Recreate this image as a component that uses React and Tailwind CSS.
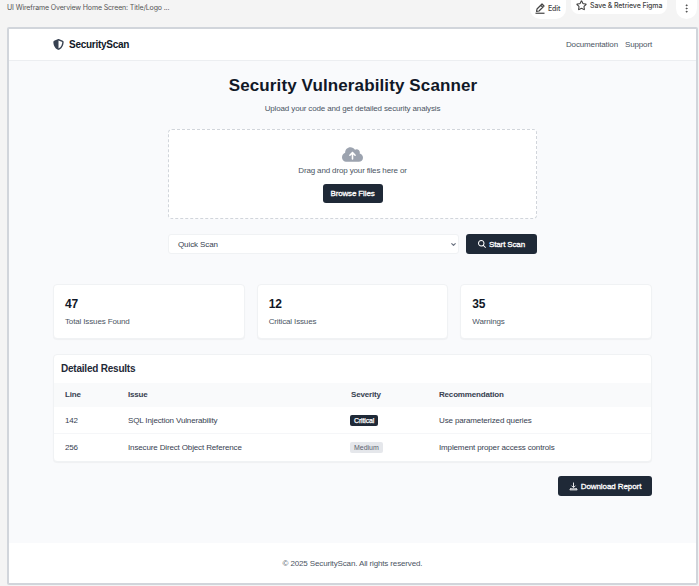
import React from "react";
import { FaShieldHalved, FaCloudArrowUp, FaMagnifyingGlass } from "react-icons/fa6";
import { ChevronDown, EllipsisVertical, Star } from "lucide-react";

const stats = [
  { value: "47", label: "Total Issues Found" },
  { value: "12", label: "Critical Issues" },
  { value: "35", label: "Warnings" },
];

const rows = [
  { line: "142", issue: "SQL Injection Vulnerability", severity: "Critical", fix: "Use parameterized queries" },
  { line: "256", issue: "Insecure Direct Object Reference", severity: "Medium", fix: "Implement proper access controls" },
];

const columns = "grid grid-cols-[63px_223px_88px_1fr] items-center pl-[11px]";
const darkButton =
  "flex items-center justify-center whitespace-nowrap rounded-[3px] bg-[#1f2937] text-white [-webkit-text-stroke:0.3px_white]";

function PenIcon() {
  return (
    <svg viewBox="0 0 20 22" className="-mt-[2px] h-[11px] w-[10px]" fill="none" stroke="currentColor" strokeWidth="2.4" strokeLinejoin="round">
      <path d="M3 17l1-5L14 2l4 4L8 16z M11.5 4.5l4 4" />
      <path d="M1 20.5h18" />
    </svg>
  );
}

function DownloadIcon() {
  return (
    <svg viewBox="0 0 16 16" className="h-[9px] w-[9px]" fill="none" stroke="currentColor" strokeWidth="1.6">
      <path d="M8 1v8M4.5 6.5L8 10l3.5-3.5" />
      <path d="M3.5 10.8L1.5 14h13l-2-3.2M3 12.2h10" />
    </svg>
  );
}

function Toolbar() {
  return (
    <div className="flex h-[27px] items-start pl-[7px] pr-[2px] font-['Inter',sans-serif] text-[#555]">
      <span className="mt-[3px] whitespace-nowrap text-[7px] leading-[9px] tracking-[-0.14px]">
        UI Wireframe Overview Home Screen: Title/Logo ...
      </span>
      <div className="ml-auto flex items-start">
        <button className="flex h-[19px] w-[36px] items-center gap-[3px] rounded-b-[10px] bg-white pl-[5px] text-[7px] font-medium leading-[15px] tracking-[-0.1px] text-[#444]">
          <PenIcon />
          <span className="-mt-[3px]">Edit</span>
        </button>
        <button className="ml-[5px] flex h-[14px] w-[96px] items-center gap-[3px] whitespace-nowrap rounded-b-[8px] bg-white pl-[5px] text-[7px] font-medium leading-[12px] tracking-[-0.1px] text-[#444]">
          <Star size={11} strokeWidth={2.4} className="-mt-[3px]" />
          <span className="-mt-[2px]">Save &amp; Retrieve Figma</span>
        </button>
        <button className="ml-[9px] flex h-[19px] w-[21px] items-center justify-center rounded-b-[11px] bg-white text-[#444]">
          <EllipsisVertical size={11} strokeWidth={2} className="-mt-[3px]" />
        </button>
      </div>
    </div>
  );
}

function Severity({ level }) {
  return (
    <span
      className={
        level === "Critical"
          ? "inline-flex h-[11px] items-center rounded-[2px] bg-[#1f2937] px-[4px] text-[7px] leading-[11px] text-white [-webkit-text-stroke:0.25px_white]"
          : "inline-flex h-[11px] items-center rounded-[2px] bg-gray-200 px-[4px] text-[7px] leading-[11px] tracking-[-0.02px] text-[#5b6270]"
      }
    >
      {level}
    </span>
  );
}

export default function App() {
  return (
    <div className="h-[586px] w-[699px] overflow-hidden bg-[#f4f4f4] font-['Liberation_Sans',Arial,sans-serif] text-[8px] leading-[12px] tracking-[-0.14px] text-[#374151]">
      <Toolbar />
      <div className="ml-[7px] flex h-[558px] w-[691px] flex-col rounded-[2px] border-2 border-[#d1d5db] bg-[#f9fafc]">
        <header className="flex h-[32px] shrink-0 items-center border-b border-[#eceef1] bg-white px-[44px]">
          <FaShieldHalved className="text-[11px] text-[#374151]" />
          <span className="ml-[5px] text-[10px] font-bold tracking-[-0.27px] text-[#111827]">SecurityScan</span>
          <nav className="ml-auto flex gap-[7px] text-[#4b5563]">
            <span>Documentation</span>
            <span>Support</span>
          </nav>
        </header>

        <main className="flex-1 px-[44px] pt-[14px]">
          <section className="mx-auto w-[369px]">
            <h1 className="whitespace-nowrap pl-px text-center text-[17px] font-bold leading-[22px] tracking-[0.12px] text-[#111827]">
              Security Vulnerability Scanner
            </h1>
            <p className="mt-[6px] text-center text-[#4b5563]">Upload your code and get detailed security analysis</p>
            <div className="mt-[14px] flex h-[90px] flex-col items-center rounded-[4px] border border-dashed border-[#d1d5db] bg-white pt-[14px]">
              <FaCloudArrowUp className="text-[21px] text-[#9ca3af]" />
              <span className="text-[#4b5563]">Drag and drop your files here or</span>
              <button className={`${darkButton} mt-[7px] h-[19px] w-[60px]`}>Browse Files</button>
            </div>
            <div className="mt-[15px] flex justify-between">
              <div className="flex h-[20px] w-[291px] items-center justify-between rounded-[3px] border border-[#f0f2f4] bg-white pl-[9px] pr-[1px]">
                <span className="pt-px tracking-[-0.1px]">Quick Scan</span>
                <ChevronDown size={7} strokeWidth={4} className="text-[#6b7280]" />
              </div>
              <button className={`${darkButton} h-[20px] w-[71px] gap-[3px]`}>
                <FaMagnifyingGlass className="text-[8px]" />
                <span className="pt-px">Start Scan</span>
              </button>
            </div>
          </section>

          <section className="mt-[30px] grid grid-cols-3 gap-[12px]">
            {stats.map((s) => (
              <div key={s.label} className="h-[55px] rounded-[4px] border border-[#f0f2f4] bg-white pl-[11px] pt-[11px] shadow-[0_1px_1px_rgba(0,0,0,0.04)]">
                <div className="text-[12px] font-bold leading-[16px] text-[#111827]">{s.value}</div>
                <div className="mt-[4px] text-[#4b5563]">{s.label}</div>
              </div>
            ))}
          </section>

          <section className="mt-[15px] h-[108px] overflow-hidden rounded-[4px] border border-[#f0f2f4] bg-white shadow-[0_1px_1px_rgba(0,0,0,0.04)]">
            <h2 className="h-[28px] pl-[7px] text-[10px] font-bold leading-[28px] tracking-[-0.22px] text-[#1f2937]">
              Detailed Results
            </h2>
            <div className={`${columns} h-[24px] bg-[#f9fafb] font-bold tracking-[-0.18px]`}>
              <span>Line</span>
              <span>Issue</span>
              <span>Severity</span>
              <span>Recommendation</span>
            </div>
            {rows.map((r) => (
              <div key={r.line} className={`${columns} h-[27px] border-b border-[#f5f6f8] last:border-b-0`}>
                <span className="pt-px">{r.line}</span>
                <span className="pt-px">{r.issue}</span>
                <span className="-ml-px flex">
                  <Severity level={r.severity} />
                </span>
                <span className="pt-px">{r.fix}</span>
              </div>
            ))}
          </section>

          <div className="mt-[14px] flex justify-end">
            <button className={`${darkButton} h-[20px] w-[94px] gap-[3px] tracking-[-0.08px]`}>
              <DownloadIcon />
              <span className="pt-px">Download Report</span>
            </button>
          </div>
        </main>

        <footer className="flex h-[40px] shrink-0 items-center justify-center bg-white pt-[2px] text-[#4b5563]">
          © 2025 SecurityScan. All rights reserved.
        </footer>
      </div>
    </div>
  );
}
